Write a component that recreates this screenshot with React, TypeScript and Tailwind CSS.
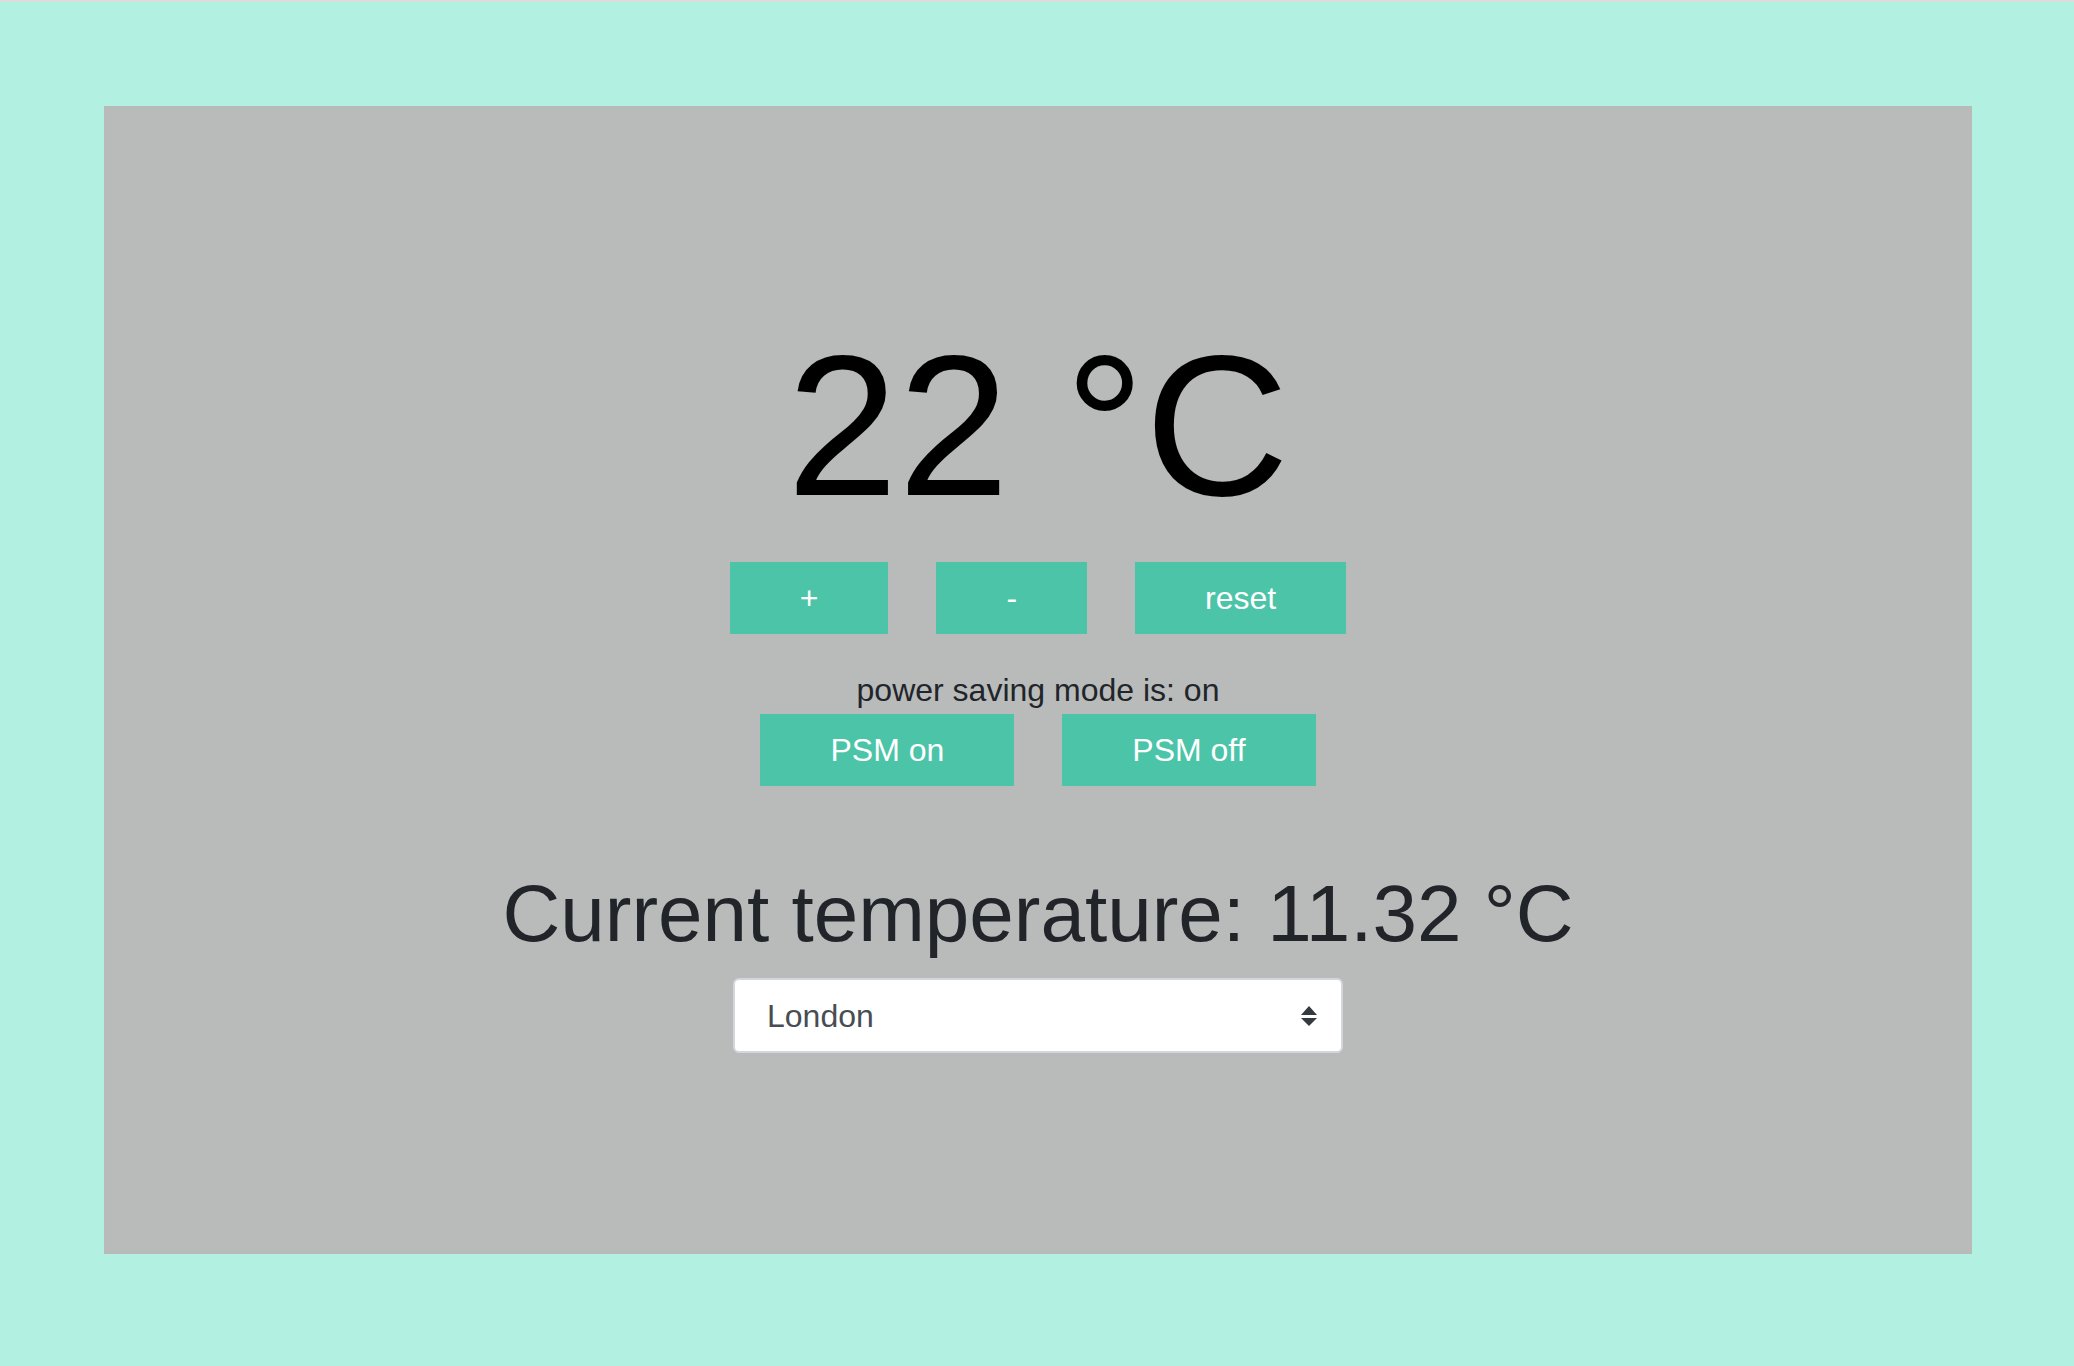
import React from "react";

export default function App() {
  const font = { fontFamily: '"Liberation Sans", Arial, sans-serif' };
  return (
    <div
      className="min-h-[1366px] w-full border-t-2 border-[#dcdcdc] bg-[#b2f0e1] pt-[104px] pb-[112px] pl-[104px] pr-[102px]"
      style={font}
    >
      <div className="flex h-[1148px] w-full flex-col items-center bg-[#b8bbba] pt-[220px]">
        <div className="text-[200px] leading-[200px] text-black">22 °C</div>

        <div className="mt-9 flex gap-12">
          <button className="bg-[#4cc4a8] px-[70px] py-3 text-[32px] leading-[48px] text-white">+</button>
          <button className="bg-[#4cc4a8] px-[70px] py-3 text-[32px] leading-[48px] text-white">-</button>
          <button className="bg-[#4cc4a8] px-[70px] py-3 text-[32px] leading-[48px] text-white">reset</button>
        </div>

        <div className="mt-8 text-[32px] leading-[48px] text-[#212529]">power saving mode is: on</div>

        <div className="flex gap-12">
          <button className="bg-[#4cc4a8] px-[70px] py-3 text-[32px] leading-[48px] text-white">PSM on</button>
          <button className="bg-[#4cc4a8] px-[70px] py-3 text-[32px] leading-[48px] text-white">PSM off</button>
        </div>

        <div className="mt-20 text-[80px] leading-[96px] text-[#212529]">Current temperature: 11.32 °C</div>

        <div className="mt-4 flex h-[75px] w-[610px] items-center justify-between rounded-[6px] border-2 border-[#d3d7db] bg-white pl-8 pr-[24px]">
          <span className="text-[32px] leading-[48px] text-[#474d53]">London</span>
          <svg width="16" height="20" viewBox="0 0 16 20" className="text-[#343a40]">
            <polygon points="8,0 16,9 0,9" fill="currentColor" />
            <polygon points="0,12 16,12 8,20" fill="currentColor" />
          </svg>
        </div>
      </div>
    </div>
  );
}
